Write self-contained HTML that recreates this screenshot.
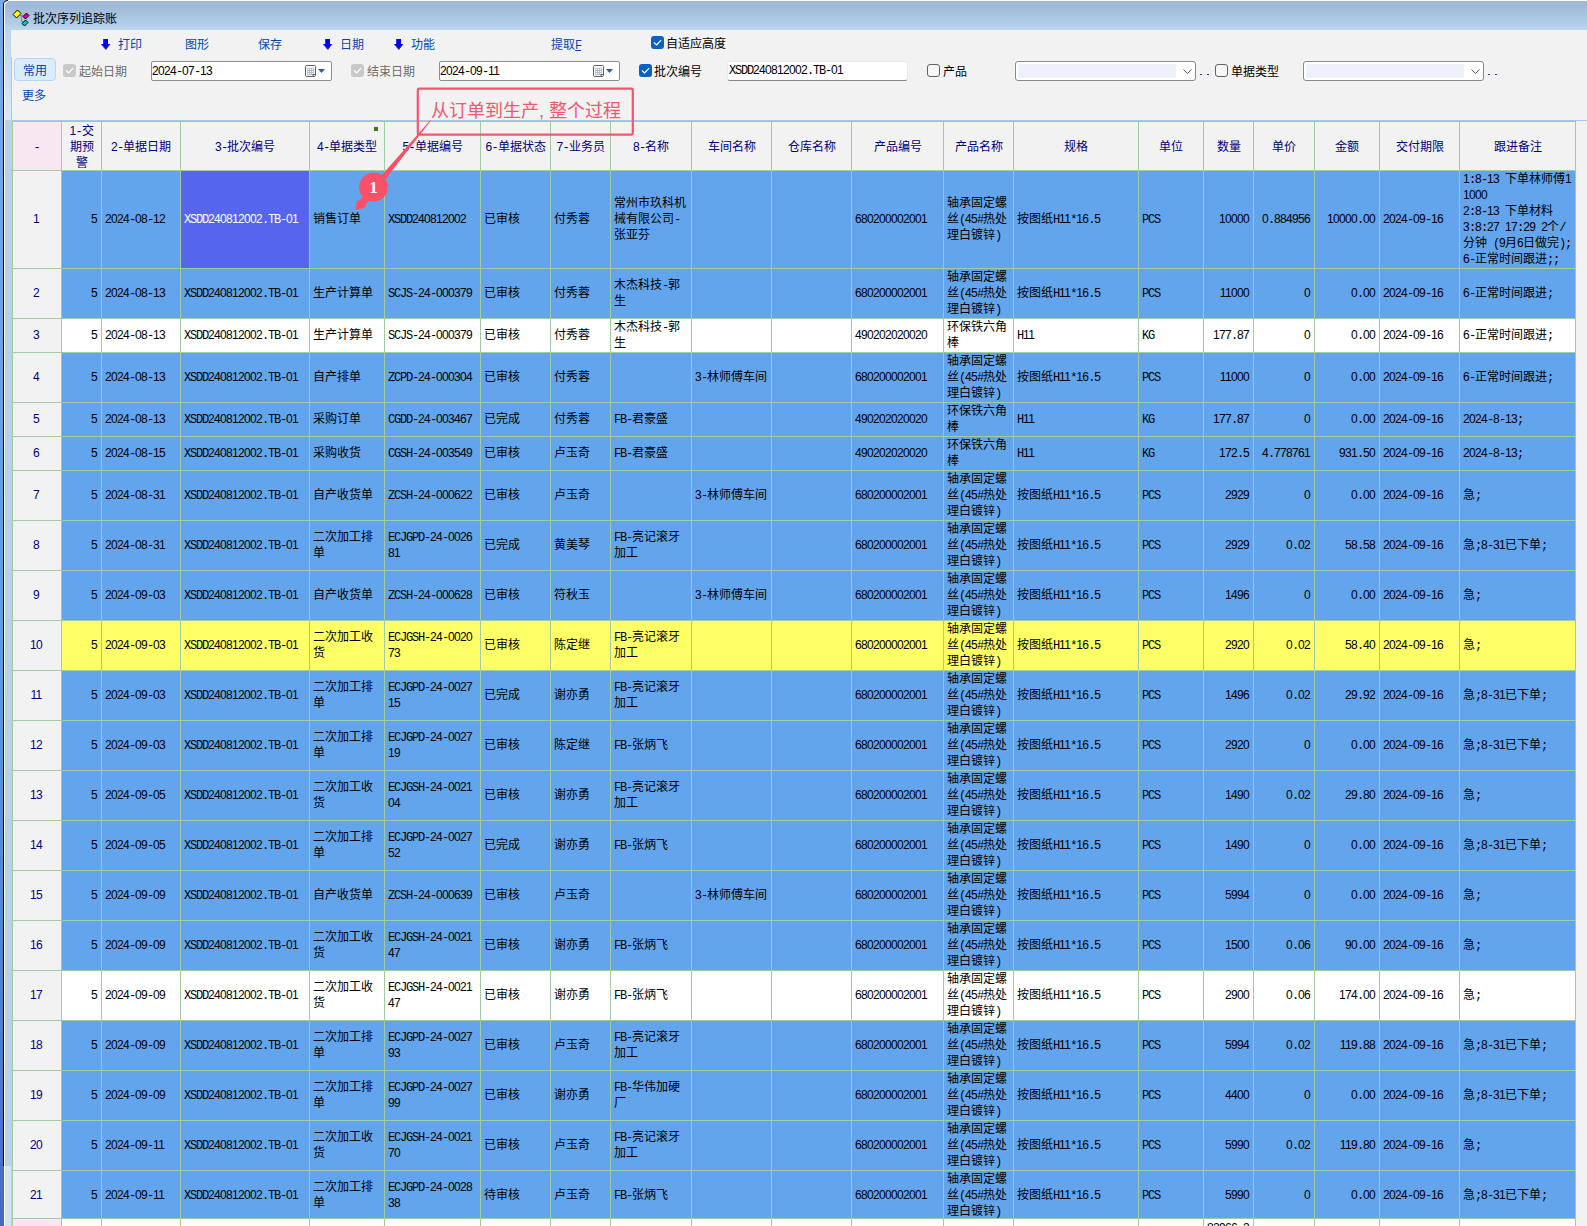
<!DOCTYPE html>
<html lang="zh-CN">
<head>
<meta charset="utf-8">
<title>批次序列追踪账</title>
<style>
html,body{margin:0;padding:0}
body{width:1587px;height:1226px;overflow:hidden;position:relative;background:#f2f2f2;font:12px/16px "Liberation Sans",sans-serif;color:#000}
div,span,b,i{box-sizing:border-box}
i{font-style:normal;font-family:"Liberation Mono",monospace;font-size:12px;letter-spacing:-1.2px;line-height:0}
u{text-decoration:none;font-family:"Liberation Sans",sans-serif;font-size:12px;letter-spacing:-0.67px;line-height:0}
.abs{position:absolute}
/* window chrome */
#lb{position:absolute;left:0;top:0;width:3px;height:1226px;background:linear-gradient(#76a8ea 0,#6ea3e9 20%,#5f9be8 50%,#4a7ad2 88%,#4468c8 100%)}
#lk{position:absolute;left:3px;top:0;width:1px;height:1226px;background:linear-gradient(#000 0,#000 1166px,#6a6a6a 1166px)}
#lw{position:absolute;left:4px;top:0;width:1px;height:1226px;background:#fff}
#ls{position:absolute;left:5px;top:0;width:7px;height:1226px;background:#bad0ea}
#ls2{position:absolute;left:5px;top:30px;width:6px;height:90px;background:linear-gradient(#bcd5ee,#dbe8f6)}
#ls4{position:absolute;left:11px;top:57px;width:1px;height:63px;background:#a9c9ef}
#ls5{position:absolute;left:11px;top:30px;width:1px;height:27px;background:#f2f2f2}
#ls3{position:absolute;left:5px;top:1166px;width:6px;height:60px;background:#d4e4f3}
#tb{position:absolute;left:5px;top:0;width:1582px;height:30px;background:linear-gradient(#fff 0,#fff 1px,#9cb6d6 1px,#a3bddb 10px,#b0cbe6 22px,#bbd5ee 30px)}
#corner{position:absolute;left:0;top:0;width:8px;height:8px}
#ttl{position:absolute;left:33px;top:11px;height:16px;line-height:16px;white-space:nowrap}
/* toolbar */
.t{position:absolute;white-space:nowrap;height:16px;line-height:16px}
.bl{color:#0645ad}
.gy{color:#6d6d6d}
.arr{position:absolute;width:10px;height:11px}
.inp{position:absolute;height:20px;background:#fff;border:1px solid #8e8e8e;border-radius:2px}
.inp .t{left:0px;top:1px}
.dot{width:2px;height:1px;background:#0645ad}
.inp2{position:absolute;height:20px;background:#fff;border:1px solid #e9e9e9;border-bottom:1px solid #868686;border-radius:3px}
.cmb{position:absolute;height:20px;background:#fff;border:1px solid #8a8a8a;border-radius:3px}
.cmb b{position:absolute;left:2px;top:2px;right:19px;bottom:2px;background:#eef0fc}
.cb{position:absolute;width:13px;height:13px;border-radius:3px}
.cb.d{background:#c9c9c9}
.cb.on{background:#0a60c4}
.cb.off{background:#f6f6f6;border:1px solid #626262}
.cb svg{position:absolute;left:0;top:0}
/* grid */
#gtop{position:absolute;left:12px;top:120px;width:1575px;height:1px;background:#a4c6ea}
#g{position:absolute;left:12px;top:121px;width:1564px;height:1105px;background:#a3cba3;overflow:hidden}
.r{position:absolute;left:0;width:1564px}
.c{position:absolute;top:0;height:100%;display:flex;align-items:center;padding:0 4px 1px 3px;white-space:nowrap;overflow:hidden}
.c span{display:block}
.h .c{background:#f2f2f2;color:#000080;justify-content:center;text-align:center;padding:2px 4px 0 4px}
.h .k0{background:#f8e6f0}
.s .c{background:#62a5ed}
.w .c{background:#fff}
.y .c{background:#ffff66}
.r .k0{background:#f2f2f2;color:#000080;justify-content:center;padding-right:5px}
.l .c{padding-top:1px;padding-bottom:0}
.h .k0{background:#f8e6f0}
.ft .k0{background:#f8e6f0}
.ft .c{align-items:flex-start;padding-top:1px}
.k1,.k15,.k16,.k17{justify-content:flex-end;text-align:right;padding-right:4px}
.s .c.f{background:#5565ee;color:#fff}
.gs{position:absolute;left:362px;top:5px;width:4px;height:4px;background:#3b7d23}
.k0{left:1px;width:48px}.k1{left:50px;width:39px}.k2{left:90px;width:78px}.k3{left:169px;width:128px}.k4{left:298px;width:74px}.k5{left:373px;width:95px}.k6{left:469px;width:69px}.k7{left:539px;width:59px}.k8{left:599px;width:80px}.k9{left:680px;width:79px}.k10{left:760px;width:79px}.k11{left:840px;width:91px}.k12{left:932px;width:69px}.k13{left:1002px;width:124px}.k14{left:1127px;width:64px}.k15{left:1192px;width:49px}.k16{left:1242px;width:60px}.k17{left:1303px;width:64px}.k18{left:1368px;width:79px}.k19{left:1448px;width:115px}
</style>
</head>
<body>
<div id="ls"></div><div id="ls2"></div><div id="ls3"></div><div id="ls4"></div><div id="ls5"></div>
<div id="tb"></div>
<div id="lb"></div><div id="lk"></div><div id="lw"></div>
<svg id="corner" viewBox="0 0 8 8"><path d="M0 0H8V0.5Q3.5 0.5 3.5 5V8H0Z" fill="#76a8ea"/><path d="M3.5 8V5Q3.5 0.5 8 0.5" fill="none" stroke="#111" stroke-width="1"/><path d="M4.5 8V5.5Q4.6 1.6 8 1.5" fill="none" stroke="#fff" stroke-width="1"/></svg>
<svg class="abs" style="left:12px;top:9px" width="20" height="20" viewBox="0 0 20 20">
<path d="M8 6.5H11.5M9.5 6.5V12.5H11.5" fill="none" stroke="#8a8a8a" stroke-width="1"/>
<path d="M5.5 1L9 4.5L4.5 9L1 5.5Z" fill="#ffff00" stroke="#000" stroke-width="1"/>
<path d="M14.5 4L17 6.5L13.5 10L11 7.5Z" fill="#e000a0" stroke="#000" stroke-width="1"/>
<path d="M13.5 11L16 13.5L12.5 17L10 14.5Z" fill="#00d0d0" stroke="#000" stroke-width="1"/>
</svg>
<div id="ttl">批次序列追踪账</div>

<svg width="0" height="0" style="position:absolute"><defs>
<g id="da"><path d="M2.2 0H7V5.1H9.3L5 10.8L0 5.1H2.2Z" fill="#0000ff"/><path d="M0 5.1L5 10.8" stroke="#5a5a20" stroke-width="0.8" fill="none"/></g>
<g id="cal"><rect x="0.5" y="0.5" width="10" height="11" rx="1.2" fill="#f1f5fc" stroke="#6e6060"/><rect x="2.2" y="3.1" width="6.6" height="6.9" fill="#b4bccb"/><g fill="#fff"><rect x="3" y="4" width="1" height="1"/><rect x="5" y="4" width="1" height="1"/><rect x="7" y="4" width="1" height="1"/><rect x="3" y="6" width="1" height="1"/><rect x="5" y="6" width="1" height="1"/><rect x="7" y="6" width="1" height="1"/><rect x="3" y="8" width="1" height="1"/><rect x="5" y="8" width="1" height="1"/><rect x="7" y="8" width="1" height="1"/></g><path d="M8 11V9.5H10.5" fill="none" stroke="#6e6060"/><path d="M13 4H20L16.5 8Z" fill="#3b5a8c"/></g>
<g id="chk"><path d="M3.2 6.7L5.5 9L9.9 4.3" fill="none" stroke="#fff" stroke-width="1.1" stroke-linecap="round" stroke-linejoin="round"/></g>
<g id="chv"><path d="M0.5 0.5L4.5 4.5L8.5 0.5" fill="none" stroke="#555" stroke-width="1"/></g>
</defs></svg>
<svg class="arr" style="left:101px;top:39px" viewBox="0 0 10 11"><use href="#da"/></svg>
<div class="t bl" style="left:118px;top:37px">打印</div>
<div class="t bl" style="left:185px;top:37px">图形</div>
<div class="t bl" style="left:258px;top:37px">保存</div>
<svg class="arr" style="left:323px;top:39px" viewBox="0 0 10 11"><use href="#da"/></svg>
<div class="t bl" style="left:340px;top:37px">日期</div>
<svg class="arr" style="left:394px;top:39px" viewBox="0 0 10 11"><use href="#da"/></svg>
<div class="t bl" style="left:411px;top:37px">功能</div>
<div class="t bl" style="left:551px;top:37px">提取<i style="text-decoration:underline">F</i></div>
<div class="cb on" style="left:651px;top:36px"><svg width="13" height="13"><use href="#chk"/></svg></div>
<div class="t" style="left:666px;top:36px">自适应高度</div>

<div class="abs" style="left:14px;top:58px;width:42px;height:23px;background:#d9ecfc;border:1px solid #b4d7f7;border-radius:4px"></div>
<div class="t bl" style="left:23px;top:63px">常用</div>
<div class="cb d" style="left:63px;top:64px"><svg width="13" height="13"><use href="#chk"/></svg></div>
<div class="t gy" style="left:79px;top:64px">起始日期</div>
<div class="inp" style="left:151px;top:61px;width:181px"><div class="t"><u>2024</u><i>-</i><u>07</u><i>-</i><u>13</u></div><svg class="abs" style="left:153px;top:3px" width="22" height="13"><use href="#cal"/></svg></div>
<div class="cb d" style="left:351px;top:64px"><svg width="13" height="13"><use href="#chk"/></svg></div>
<div class="t gy" style="left:367px;top:64px">结束日期</div>
<div class="inp" style="left:439px;top:61px;width:181px"><div class="t"><u>2024</u><i>-</i><u>09</u><i>-</i><u>11</u></div><svg class="abs" style="left:153px;top:3px" width="22" height="13"><use href="#cal"/></svg></div>
<div class="cb on" style="left:639px;top:64px"><svg width="13" height="13"><use href="#chk"/></svg></div>
<div class="t" style="left:654px;top:64px">批次编号</div>
<div class="inp2" style="left:727px;top:61px;width:181px"><div class="t" style="left:1px;top:0px"><i>XSDD</i><u>240812002</u><i>.TB-</i><u>01</u></div></div>
<div class="cb off" style="left:927px;top:64px"></div>
<div class="t" style="left:943px;top:64px">产品</div>
<div class="cmb" style="left:1015px;top:61px;width:181px"><b></b><svg class="abs" style="left:167px;top:7px" width="9" height="6"><use href="#chv"/></svg></div>
<div class="abs dot" style="left:1200px;top:74px"></div><div class="abs dot" style="left:1207px;top:74px"></div>
<div class="cb off" style="left:1215px;top:64px"></div>
<div class="t" style="left:1231px;top:64px">单据类型</div>
<div class="cmb" style="left:1303px;top:61px;width:181px"><b></b><svg class="abs" style="left:167px;top:7px" width="9" height="6"><use href="#chv"/></svg></div>
<div class="abs dot" style="left:1488px;top:74px"></div><div class="abs dot" style="left:1495px;top:74px"></div>
<div class="t bl" style="left:22px;top:88px">更多</div>


<div id="gtop"></div>
<div id="g">
<div class="r h" style="top:1px;height:48px">
<div class="c k0"><span><i>-</i></span></div>
<div class="c k1"><span><u>1</u><i>-</i>交<br>期预<br>警</span></div>
<div class="c k2"><span><u>2</u><i>-</i>单据日期</span></div>
<div class="c k3"><span><u>3</u><i>-</i>批次编号</span></div>
<div class="c k4"><span><u>4</u><i>-</i>单据类型</span></div>
<div class="c k5"><span><u>5</u><i>-</i>单据编号</span></div>
<div class="c k6"><span><u>6</u><i>-</i>单据状态</span></div>
<div class="c k7"><span><u>7</u><i>-</i>业务员</span></div>
<div class="c k8"><span><u>8</u><i>-</i>名称</span></div>
<div class="c k9"><span>车间名称</span></div>
<div class="c k10"><span>仓库名称</span></div>
<div class="c k11"><span>产品编号</span></div>
<div class="c k12"><span>产品名称</span></div>
<div class="c k13"><span>规格</span></div>
<div class="c k14"><span>单位</span></div>
<div class="c k15"><span>数量</span></div>
<div class="c k16"><span>单价</span></div>
<div class="c k17"><span>金额</span></div>
<div class="c k18"><span>交付期限</span></div>
<div class="c k19"><span>跟进备注</span></div>
<b class="gs"></b>
</div>
<div class="r s" style="top:50px;height:97px">
<div class="c k0"><span><u>1</u></span></div>
<div class="c k1"><span><u>5</u></span></div>
<div class="c k2"><span><u>2024</u><i>-</i><u>08</u><i>-</i><u>12</u></span></div>
<div class="c k3 f"><span><i>XSDD</i><u>240812002</u><i>.TB-</i><u>01</u></span></div>
<div class="c k4"><span>销售订单</span></div>
<div class="c k5"><span><i>XSDD</i><u>240812002</u></span></div>
<div class="c k6"><span>已审核</span></div>
<div class="c k7"><span>付秀蓉</span></div>
<div class="c k8"><span>常州市玖科机<br>械有限公司<i>-</i><br>张亚芬</span></div>
<div class="c k9"></div>
<div class="c k10"></div>
<div class="c k11"><span><u>680200002001</u></span></div>
<div class="c k12"><span>轴承固定螺<br>丝<i>(</i><u>45</u><i>#</i>热处<br>理白镀锌<i>)</i></span></div>
<div class="c k13"><span>按图纸<i>H</i><u>11</u><i>*</i><u>16</u><i>.</i><u>5</u></span></div>
<div class="c k14"><span><i>PCS</i></span></div>
<div class="c k15"><span><u>10000</u></span></div>
<div class="c k16"><span><u>0</u><i>.</i><u>884956</u></span></div>
<div class="c k17"><span><u>10000</u><i>.</i><u>00</u></span></div>
<div class="c k18"><span><u>2024</u><i>-</i><u>09</u><i>-</i><u>16</u></span></div>
<div class="c k19"><span><u>1</u><i>:</i><u>8</u><i>-</i><u>13</u><i> </i>下单林师傅<u>1</u><br><u>1000</u><br><u>2</u><i>:</i><u>8</u><i>-</i><u>13</u><i> </i>下单材料<br><u>3</u><i>:</i><u>8</u><i>:</i><u>27</u><i> </i><u>17</u><i>:</i><u>29</u><i> </i><u>2</u>个<i>/</i><br>分钟<i> (</i><u>9</u>月<u>6</u>日做完<i>);</i><br><u>6</u><i>-</i>正常时间跟进<i>;;</i></span></div>
</div>
<div class="r s" style="top:148px;height:49px">
<div class="c k0"><span><u>2</u></span></div>
<div class="c k1"><span><u>5</u></span></div>
<div class="c k2"><span><u>2024</u><i>-</i><u>08</u><i>-</i><u>13</u></span></div>
<div class="c k3"><span><i>XSDD</i><u>240812002</u><i>.TB-</i><u>01</u></span></div>
<div class="c k4"><span>生产计算单</span></div>
<div class="c k5"><span><i>SCJS-</i><u>24</u><i>-</i><u>000379</u></span></div>
<div class="c k6"><span>已审核</span></div>
<div class="c k7"><span>付秀蓉</span></div>
<div class="c k8"><span>木杰科技<i>-</i>郭<br>生</span></div>
<div class="c k9"></div>
<div class="c k10"></div>
<div class="c k11"><span><u>680200002001</u></span></div>
<div class="c k12"><span>轴承固定螺<br>丝<i>(</i><u>45</u><i>#</i>热处<br>理白镀锌<i>)</i></span></div>
<div class="c k13"><span>按图纸<i>H</i><u>11</u><i>*</i><u>16</u><i>.</i><u>5</u></span></div>
<div class="c k14"><span><i>PCS</i></span></div>
<div class="c k15"><span><u>11000</u></span></div>
<div class="c k16"><span><u>0</u></span></div>
<div class="c k17"><span><u>0</u><i>.</i><u>00</u></span></div>
<div class="c k18"><span><u>2024</u><i>-</i><u>09</u><i>-</i><u>16</u></span></div>
<div class="c k19"><span><u>6</u><i>-</i>正常时间跟进<i>;</i></span></div>
</div>
<div class="r w" style="top:198px;height:33px">
<div class="c k0"><span><u>3</u></span></div>
<div class="c k1"><span><u>5</u></span></div>
<div class="c k2"><span><u>2024</u><i>-</i><u>08</u><i>-</i><u>13</u></span></div>
<div class="c k3"><span><i>XSDD</i><u>240812002</u><i>.TB-</i><u>01</u></span></div>
<div class="c k4"><span>生产计算单</span></div>
<div class="c k5"><span><i>SCJS-</i><u>24</u><i>-</i><u>000379</u></span></div>
<div class="c k6"><span>已审核</span></div>
<div class="c k7"><span>付秀蓉</span></div>
<div class="c k8"><span>木杰科技<i>-</i>郭<br>生</span></div>
<div class="c k9"></div>
<div class="c k10"></div>
<div class="c k11"><span><u>490202020020</u></span></div>
<div class="c k12"><span>环保铁六角<br>棒</span></div>
<div class="c k13"><span><i>H</i><u>11</u></span></div>
<div class="c k14"><span><i>KG</i></span></div>
<div class="c k15"><span><u>177</u><i>.</i><u>87</u></span></div>
<div class="c k16"><span><u>0</u></span></div>
<div class="c k17"><span><u>0</u><i>.</i><u>00</u></span></div>
<div class="c k18"><span><u>2024</u><i>-</i><u>09</u><i>-</i><u>16</u></span></div>
<div class="c k19"><span><u>6</u><i>-</i>正常时间跟进<i>;</i></span></div>
</div>
<div class="r s" style="top:232px;height:49px">
<div class="c k0"><span><u>4</u></span></div>
<div class="c k1"><span><u>5</u></span></div>
<div class="c k2"><span><u>2024</u><i>-</i><u>08</u><i>-</i><u>13</u></span></div>
<div class="c k3"><span><i>XSDD</i><u>240812002</u><i>.TB-</i><u>01</u></span></div>
<div class="c k4"><span>自产排单</span></div>
<div class="c k5"><span><i>ZCPD-</i><u>24</u><i>-</i><u>000304</u></span></div>
<div class="c k6"><span>已审核</span></div>
<div class="c k7"><span>付秀蓉</span></div>
<div class="c k8"></div>
<div class="c k9"><span><u>3</u><i>-</i>林师傅车间</span></div>
<div class="c k10"></div>
<div class="c k11"><span><u>680200002001</u></span></div>
<div class="c k12"><span>轴承固定螺<br>丝<i>(</i><u>45</u><i>#</i>热处<br>理白镀锌<i>)</i></span></div>
<div class="c k13"><span>按图纸<i>H</i><u>11</u><i>*</i><u>16</u><i>.</i><u>5</u></span></div>
<div class="c k14"><span><i>PCS</i></span></div>
<div class="c k15"><span><u>11000</u></span></div>
<div class="c k16"><span><u>0</u></span></div>
<div class="c k17"><span><u>0</u><i>.</i><u>00</u></span></div>
<div class="c k18"><span><u>2024</u><i>-</i><u>09</u><i>-</i><u>16</u></span></div>
<div class="c k19"><span><u>6</u><i>-</i>正常时间跟进<i>;</i></span></div>
</div>
<div class="r s" style="top:282px;height:33px">
<div class="c k0"><span><u>5</u></span></div>
<div class="c k1"><span><u>5</u></span></div>
<div class="c k2"><span><u>2024</u><i>-</i><u>08</u><i>-</i><u>13</u></span></div>
<div class="c k3"><span><i>XSDD</i><u>240812002</u><i>.TB-</i><u>01</u></span></div>
<div class="c k4"><span>采购订单</span></div>
<div class="c k5"><span><i>CGDD-</i><u>24</u><i>-</i><u>003467</u></span></div>
<div class="c k6"><span>已完成</span></div>
<div class="c k7"><span>付秀蓉</span></div>
<div class="c k8"><span><i>FB-</i>君豪盛</span></div>
<div class="c k9"></div>
<div class="c k10"></div>
<div class="c k11"><span><u>490202020020</u></span></div>
<div class="c k12"><span>环保铁六角<br>棒</span></div>
<div class="c k13"><span><i>H</i><u>11</u></span></div>
<div class="c k14"><span><i>KG</i></span></div>
<div class="c k15"><span><u>177</u><i>.</i><u>87</u></span></div>
<div class="c k16"><span><u>0</u></span></div>
<div class="c k17"><span><u>0</u><i>.</i><u>00</u></span></div>
<div class="c k18"><span><u>2024</u><i>-</i><u>09</u><i>-</i><u>16</u></span></div>
<div class="c k19"><span><u>2024</u><i>-</i><u>8</u><i>-</i><u>13</u><i>;</i></span></div>
</div>
<div class="r s" style="top:316px;height:33px">
<div class="c k0"><span><u>6</u></span></div>
<div class="c k1"><span><u>5</u></span></div>
<div class="c k2"><span><u>2024</u><i>-</i><u>08</u><i>-</i><u>15</u></span></div>
<div class="c k3"><span><i>XSDD</i><u>240812002</u><i>.TB-</i><u>01</u></span></div>
<div class="c k4"><span>采购收货</span></div>
<div class="c k5"><span><i>CGSH-</i><u>24</u><i>-</i><u>003549</u></span></div>
<div class="c k6"><span>已审核</span></div>
<div class="c k7"><span>卢玉奇</span></div>
<div class="c k8"><span><i>FB-</i>君豪盛</span></div>
<div class="c k9"></div>
<div class="c k10"></div>
<div class="c k11"><span><u>490202020020</u></span></div>
<div class="c k12"><span>环保铁六角<br>棒</span></div>
<div class="c k13"><span><i>H</i><u>11</u></span></div>
<div class="c k14"><span><i>KG</i></span></div>
<div class="c k15"><span><u>172</u><i>.</i><u>5</u></span></div>
<div class="c k16"><span><u>4</u><i>.</i><u>778761</u></span></div>
<div class="c k17"><span><u>931</u><i>.</i><u>50</u></span></div>
<div class="c k18"><span><u>2024</u><i>-</i><u>09</u><i>-</i><u>16</u></span></div>
<div class="c k19"><span><u>2024</u><i>-</i><u>8</u><i>-</i><u>13</u><i>;</i></span></div>
</div>
<div class="r s" style="top:350px;height:49px">
<div class="c k0"><span><u>7</u></span></div>
<div class="c k1"><span><u>5</u></span></div>
<div class="c k2"><span><u>2024</u><i>-</i><u>08</u><i>-</i><u>31</u></span></div>
<div class="c k3"><span><i>XSDD</i><u>240812002</u><i>.TB-</i><u>01</u></span></div>
<div class="c k4"><span>自产收货单</span></div>
<div class="c k5"><span><i>ZCSH-</i><u>24</u><i>-</i><u>000622</u></span></div>
<div class="c k6"><span>已审核</span></div>
<div class="c k7"><span>卢玉奇</span></div>
<div class="c k8"></div>
<div class="c k9"><span><u>3</u><i>-</i>林师傅车间</span></div>
<div class="c k10"></div>
<div class="c k11"><span><u>680200002001</u></span></div>
<div class="c k12"><span>轴承固定螺<br>丝<i>(</i><u>45</u><i>#</i>热处<br>理白镀锌<i>)</i></span></div>
<div class="c k13"><span>按图纸<i>H</i><u>11</u><i>*</i><u>16</u><i>.</i><u>5</u></span></div>
<div class="c k14"><span><i>PCS</i></span></div>
<div class="c k15"><span><u>2929</u></span></div>
<div class="c k16"><span><u>0</u></span></div>
<div class="c k17"><span><u>0</u><i>.</i><u>00</u></span></div>
<div class="c k18"><span><u>2024</u><i>-</i><u>09</u><i>-</i><u>16</u></span></div>
<div class="c k19"><span>急<i>;</i></span></div>
</div>
<div class="r s" style="top:400px;height:49px">
<div class="c k0"><span><u>8</u></span></div>
<div class="c k1"><span><u>5</u></span></div>
<div class="c k2"><span><u>2024</u><i>-</i><u>08</u><i>-</i><u>31</u></span></div>
<div class="c k3"><span><i>XSDD</i><u>240812002</u><i>.TB-</i><u>01</u></span></div>
<div class="c k4"><span>二次加工排<br>单</span></div>
<div class="c k5"><span><i>ECJGPD-</i><u>24</u><i>-</i><u>0026</u><br><u>81</u></span></div>
<div class="c k6"><span>已完成</span></div>
<div class="c k7"><span>黄美琴</span></div>
<div class="c k8"><span><i>FB-</i>亮记滚牙<br>加工</span></div>
<div class="c k9"></div>
<div class="c k10"></div>
<div class="c k11"><span><u>680200002001</u></span></div>
<div class="c k12"><span>轴承固定螺<br>丝<i>(</i><u>45</u><i>#</i>热处<br>理白镀锌<i>)</i></span></div>
<div class="c k13"><span>按图纸<i>H</i><u>11</u><i>*</i><u>16</u><i>.</i><u>5</u></span></div>
<div class="c k14"><span><i>PCS</i></span></div>
<div class="c k15"><span><u>2929</u></span></div>
<div class="c k16"><span><u>0</u><i>.</i><u>02</u></span></div>
<div class="c k17"><span><u>58</u><i>.</i><u>58</u></span></div>
<div class="c k18"><span><u>2024</u><i>-</i><u>09</u><i>-</i><u>16</u></span></div>
<div class="c k19"><span>急<i>;</i><u>8</u><i>-</i><u>31</u>已下单<i>;</i></span></div>
</div>
<div class="r s" style="top:450px;height:49px">
<div class="c k0"><span><u>9</u></span></div>
<div class="c k1"><span><u>5</u></span></div>
<div class="c k2"><span><u>2024</u><i>-</i><u>09</u><i>-</i><u>03</u></span></div>
<div class="c k3"><span><i>XSDD</i><u>240812002</u><i>.TB-</i><u>01</u></span></div>
<div class="c k4"><span>自产收货单</span></div>
<div class="c k5"><span><i>ZCSH-</i><u>24</u><i>-</i><u>000628</u></span></div>
<div class="c k6"><span>已审核</span></div>
<div class="c k7"><span>符秋玉</span></div>
<div class="c k8"></div>
<div class="c k9"><span><u>3</u><i>-</i>林师傅车间</span></div>
<div class="c k10"></div>
<div class="c k11"><span><u>680200002001</u></span></div>
<div class="c k12"><span>轴承固定螺<br>丝<i>(</i><u>45</u><i>#</i>热处<br>理白镀锌<i>)</i></span></div>
<div class="c k13"><span>按图纸<i>H</i><u>11</u><i>*</i><u>16</u><i>.</i><u>5</u></span></div>
<div class="c k14"><span><i>PCS</i></span></div>
<div class="c k15"><span><u>1496</u></span></div>
<div class="c k16"><span><u>0</u></span></div>
<div class="c k17"><span><u>0</u><i>.</i><u>00</u></span></div>
<div class="c k18"><span><u>2024</u><i>-</i><u>09</u><i>-</i><u>16</u></span></div>
<div class="c k19"><span>急<i>;</i></span></div>
</div>
<div class="r y" style="top:500px;height:49px">
<div class="c k0"><span><u>10</u></span></div>
<div class="c k1"><span><u>5</u></span></div>
<div class="c k2"><span><u>2024</u><i>-</i><u>09</u><i>-</i><u>03</u></span></div>
<div class="c k3"><span><i>XSDD</i><u>240812002</u><i>.TB-</i><u>01</u></span></div>
<div class="c k4"><span>二次加工收<br>货</span></div>
<div class="c k5"><span><i>ECJGSH-</i><u>24</u><i>-</i><u>0020</u><br><u>73</u></span></div>
<div class="c k6"><span>已审核</span></div>
<div class="c k7"><span>陈定继</span></div>
<div class="c k8"><span><i>FB-</i>亮记滚牙<br>加工</span></div>
<div class="c k9"></div>
<div class="c k10"></div>
<div class="c k11"><span><u>680200002001</u></span></div>
<div class="c k12"><span>轴承固定螺<br>丝<i>(</i><u>45</u><i>#</i>热处<br>理白镀锌<i>)</i></span></div>
<div class="c k13"><span>按图纸<i>H</i><u>11</u><i>*</i><u>16</u><i>.</i><u>5</u></span></div>
<div class="c k14"><span><i>PCS</i></span></div>
<div class="c k15"><span><u>2920</u></span></div>
<div class="c k16"><span><u>0</u><i>.</i><u>02</u></span></div>
<div class="c k17"><span><u>58</u><i>.</i><u>40</u></span></div>
<div class="c k18"><span><u>2024</u><i>-</i><u>09</u><i>-</i><u>16</u></span></div>
<div class="c k19"><span>急<i>;</i></span></div>
</div>
<div class="r s" style="top:550px;height:49px">
<div class="c k0"><span><u>11</u></span></div>
<div class="c k1"><span><u>5</u></span></div>
<div class="c k2"><span><u>2024</u><i>-</i><u>09</u><i>-</i><u>03</u></span></div>
<div class="c k3"><span><i>XSDD</i><u>240812002</u><i>.TB-</i><u>01</u></span></div>
<div class="c k4"><span>二次加工排<br>单</span></div>
<div class="c k5"><span><i>ECJGPD-</i><u>24</u><i>-</i><u>0027</u><br><u>15</u></span></div>
<div class="c k6"><span>已完成</span></div>
<div class="c k7"><span>谢亦勇</span></div>
<div class="c k8"><span><i>FB-</i>亮记滚牙<br>加工</span></div>
<div class="c k9"></div>
<div class="c k10"></div>
<div class="c k11"><span><u>680200002001</u></span></div>
<div class="c k12"><span>轴承固定螺<br>丝<i>(</i><u>45</u><i>#</i>热处<br>理白镀锌<i>)</i></span></div>
<div class="c k13"><span>按图纸<i>H</i><u>11</u><i>*</i><u>16</u><i>.</i><u>5</u></span></div>
<div class="c k14"><span><i>PCS</i></span></div>
<div class="c k15"><span><u>1496</u></span></div>
<div class="c k16"><span><u>0</u><i>.</i><u>02</u></span></div>
<div class="c k17"><span><u>29</u><i>.</i><u>92</u></span></div>
<div class="c k18"><span><u>2024</u><i>-</i><u>09</u><i>-</i><u>16</u></span></div>
<div class="c k19"><span>急<i>;</i><u>8</u><i>-</i><u>31</u>已下单<i>;</i></span></div>
</div>
<div class="r s" style="top:600px;height:49px">
<div class="c k0"><span><u>12</u></span></div>
<div class="c k1"><span><u>5</u></span></div>
<div class="c k2"><span><u>2024</u><i>-</i><u>09</u><i>-</i><u>03</u></span></div>
<div class="c k3"><span><i>XSDD</i><u>240812002</u><i>.TB-</i><u>01</u></span></div>
<div class="c k4"><span>二次加工排<br>单</span></div>
<div class="c k5"><span><i>ECJGPD-</i><u>24</u><i>-</i><u>0027</u><br><u>19</u></span></div>
<div class="c k6"><span>已审核</span></div>
<div class="c k7"><span>陈定继</span></div>
<div class="c k8"><span><i>FB-</i>张炳飞</span></div>
<div class="c k9"></div>
<div class="c k10"></div>
<div class="c k11"><span><u>680200002001</u></span></div>
<div class="c k12"><span>轴承固定螺<br>丝<i>(</i><u>45</u><i>#</i>热处<br>理白镀锌<i>)</i></span></div>
<div class="c k13"><span>按图纸<i>H</i><u>11</u><i>*</i><u>16</u><i>.</i><u>5</u></span></div>
<div class="c k14"><span><i>PCS</i></span></div>
<div class="c k15"><span><u>2920</u></span></div>
<div class="c k16"><span><u>0</u></span></div>
<div class="c k17"><span><u>0</u><i>.</i><u>00</u></span></div>
<div class="c k18"><span><u>2024</u><i>-</i><u>09</u><i>-</i><u>16</u></span></div>
<div class="c k19"><span>急<i>;</i><u>8</u><i>-</i><u>31</u>已下单<i>;</i></span></div>
</div>
<div class="r s" style="top:650px;height:49px">
<div class="c k0"><span><u>13</u></span></div>
<div class="c k1"><span><u>5</u></span></div>
<div class="c k2"><span><u>2024</u><i>-</i><u>09</u><i>-</i><u>05</u></span></div>
<div class="c k3"><span><i>XSDD</i><u>240812002</u><i>.TB-</i><u>01</u></span></div>
<div class="c k4"><span>二次加工收<br>货</span></div>
<div class="c k5"><span><i>ECJGSH-</i><u>24</u><i>-</i><u>0021</u><br><u>04</u></span></div>
<div class="c k6"><span>已审核</span></div>
<div class="c k7"><span>谢亦勇</span></div>
<div class="c k8"><span><i>FB-</i>亮记滚牙<br>加工</span></div>
<div class="c k9"></div>
<div class="c k10"></div>
<div class="c k11"><span><u>680200002001</u></span></div>
<div class="c k12"><span>轴承固定螺<br>丝<i>(</i><u>45</u><i>#</i>热处<br>理白镀锌<i>)</i></span></div>
<div class="c k13"><span>按图纸<i>H</i><u>11</u><i>*</i><u>16</u><i>.</i><u>5</u></span></div>
<div class="c k14"><span><i>PCS</i></span></div>
<div class="c k15"><span><u>1490</u></span></div>
<div class="c k16"><span><u>0</u><i>.</i><u>02</u></span></div>
<div class="c k17"><span><u>29</u><i>.</i><u>80</u></span></div>
<div class="c k18"><span><u>2024</u><i>-</i><u>09</u><i>-</i><u>16</u></span></div>
<div class="c k19"><span>急<i>;</i></span></div>
</div>
<div class="r s" style="top:700px;height:49px">
<div class="c k0"><span><u>14</u></span></div>
<div class="c k1"><span><u>5</u></span></div>
<div class="c k2"><span><u>2024</u><i>-</i><u>09</u><i>-</i><u>05</u></span></div>
<div class="c k3"><span><i>XSDD</i><u>240812002</u><i>.TB-</i><u>01</u></span></div>
<div class="c k4"><span>二次加工排<br>单</span></div>
<div class="c k5"><span><i>ECJGPD-</i><u>24</u><i>-</i><u>0027</u><br><u>52</u></span></div>
<div class="c k6"><span>已完成</span></div>
<div class="c k7"><span>谢亦勇</span></div>
<div class="c k8"><span><i>FB-</i>张炳飞</span></div>
<div class="c k9"></div>
<div class="c k10"></div>
<div class="c k11"><span><u>680200002001</u></span></div>
<div class="c k12"><span>轴承固定螺<br>丝<i>(</i><u>45</u><i>#</i>热处<br>理白镀锌<i>)</i></span></div>
<div class="c k13"><span>按图纸<i>H</i><u>11</u><i>*</i><u>16</u><i>.</i><u>5</u></span></div>
<div class="c k14"><span><i>PCS</i></span></div>
<div class="c k15"><span><u>1490</u></span></div>
<div class="c k16"><span><u>0</u></span></div>
<div class="c k17"><span><u>0</u><i>.</i><u>00</u></span></div>
<div class="c k18"><span><u>2024</u><i>-</i><u>09</u><i>-</i><u>16</u></span></div>
<div class="c k19"><span>急<i>;</i><u>8</u><i>-</i><u>31</u>已下单<i>;</i></span></div>
</div>
<div class="r s" style="top:750px;height:49px">
<div class="c k0"><span><u>15</u></span></div>
<div class="c k1"><span><u>5</u></span></div>
<div class="c k2"><span><u>2024</u><i>-</i><u>09</u><i>-</i><u>09</u></span></div>
<div class="c k3"><span><i>XSDD</i><u>240812002</u><i>.TB-</i><u>01</u></span></div>
<div class="c k4"><span>自产收货单</span></div>
<div class="c k5"><span><i>ZCSH-</i><u>24</u><i>-</i><u>000639</u></span></div>
<div class="c k6"><span>已审核</span></div>
<div class="c k7"><span>卢玉奇</span></div>
<div class="c k8"></div>
<div class="c k9"><span><u>3</u><i>-</i>林师傅车间</span></div>
<div class="c k10"></div>
<div class="c k11"><span><u>680200002001</u></span></div>
<div class="c k12"><span>轴承固定螺<br>丝<i>(</i><u>45</u><i>#</i>热处<br>理白镀锌<i>)</i></span></div>
<div class="c k13"><span>按图纸<i>H</i><u>11</u><i>*</i><u>16</u><i>.</i><u>5</u></span></div>
<div class="c k14"><span><i>PCS</i></span></div>
<div class="c k15"><span><u>5994</u></span></div>
<div class="c k16"><span><u>0</u></span></div>
<div class="c k17"><span><u>0</u><i>.</i><u>00</u></span></div>
<div class="c k18"><span><u>2024</u><i>-</i><u>09</u><i>-</i><u>16</u></span></div>
<div class="c k19"><span>急<i>;</i></span></div>
</div>
<div class="r s" style="top:800px;height:49px">
<div class="c k0"><span><u>16</u></span></div>
<div class="c k1"><span><u>5</u></span></div>
<div class="c k2"><span><u>2024</u><i>-</i><u>09</u><i>-</i><u>09</u></span></div>
<div class="c k3"><span><i>XSDD</i><u>240812002</u><i>.TB-</i><u>01</u></span></div>
<div class="c k4"><span>二次加工收<br>货</span></div>
<div class="c k5"><span><i>ECJGSH-</i><u>24</u><i>-</i><u>0021</u><br><u>47</u></span></div>
<div class="c k6"><span>已审核</span></div>
<div class="c k7"><span>谢亦勇</span></div>
<div class="c k8"><span><i>FB-</i>张炳飞</span></div>
<div class="c k9"></div>
<div class="c k10"></div>
<div class="c k11"><span><u>680200002001</u></span></div>
<div class="c k12"><span>轴承固定螺<br>丝<i>(</i><u>45</u><i>#</i>热处<br>理白镀锌<i>)</i></span></div>
<div class="c k13"><span>按图纸<i>H</i><u>11</u><i>*</i><u>16</u><i>.</i><u>5</u></span></div>
<div class="c k14"><span><i>PCS</i></span></div>
<div class="c k15"><span><u>1500</u></span></div>
<div class="c k16"><span><u>0</u><i>.</i><u>06</u></span></div>
<div class="c k17"><span><u>90</u><i>.</i><u>00</u></span></div>
<div class="c k18"><span><u>2024</u><i>-</i><u>09</u><i>-</i><u>16</u></span></div>
<div class="c k19"><span>急<i>;</i></span></div>
</div>
<div class="r w" style="top:850px;height:49px">
<div class="c k0"><span><u>17</u></span></div>
<div class="c k1"><span><u>5</u></span></div>
<div class="c k2"><span><u>2024</u><i>-</i><u>09</u><i>-</i><u>09</u></span></div>
<div class="c k3"><span><i>XSDD</i><u>240812002</u><i>.TB-</i><u>01</u></span></div>
<div class="c k4"><span>二次加工收<br>货</span></div>
<div class="c k5"><span><i>ECJGSH-</i><u>24</u><i>-</i><u>0021</u><br><u>47</u></span></div>
<div class="c k6"><span>已审核</span></div>
<div class="c k7"><span>谢亦勇</span></div>
<div class="c k8"><span><i>FB-</i>张炳飞</span></div>
<div class="c k9"></div>
<div class="c k10"></div>
<div class="c k11"><span><u>680200002001</u></span></div>
<div class="c k12"><span>轴承固定螺<br>丝<i>(</i><u>45</u><i>#</i>热处<br>理白镀锌<i>)</i></span></div>
<div class="c k13"><span>按图纸<i>H</i><u>11</u><i>*</i><u>16</u><i>.</i><u>5</u></span></div>
<div class="c k14"><span><i>PCS</i></span></div>
<div class="c k15"><span><u>2900</u></span></div>
<div class="c k16"><span><u>0</u><i>.</i><u>06</u></span></div>
<div class="c k17"><span><u>174</u><i>.</i><u>00</u></span></div>
<div class="c k18"><span><u>2024</u><i>-</i><u>09</u><i>-</i><u>16</u></span></div>
<div class="c k19"><span>急<i>;</i></span></div>
</div>
<div class="r s" style="top:900px;height:49px">
<div class="c k0"><span><u>18</u></span></div>
<div class="c k1"><span><u>5</u></span></div>
<div class="c k2"><span><u>2024</u><i>-</i><u>09</u><i>-</i><u>09</u></span></div>
<div class="c k3"><span><i>XSDD</i><u>240812002</u><i>.TB-</i><u>01</u></span></div>
<div class="c k4"><span>二次加工排<br>单</span></div>
<div class="c k5"><span><i>ECJGPD-</i><u>24</u><i>-</i><u>0027</u><br><u>93</u></span></div>
<div class="c k6"><span>已审核</span></div>
<div class="c k7"><span>卢玉奇</span></div>
<div class="c k8"><span><i>FB-</i>亮记滚牙<br>加工</span></div>
<div class="c k9"></div>
<div class="c k10"></div>
<div class="c k11"><span><u>680200002001</u></span></div>
<div class="c k12"><span>轴承固定螺<br>丝<i>(</i><u>45</u><i>#</i>热处<br>理白镀锌<i>)</i></span></div>
<div class="c k13"><span>按图纸<i>H</i><u>11</u><i>*</i><u>16</u><i>.</i><u>5</u></span></div>
<div class="c k14"><span><i>PCS</i></span></div>
<div class="c k15"><span><u>5994</u></span></div>
<div class="c k16"><span><u>0</u><i>.</i><u>02</u></span></div>
<div class="c k17"><span><u>119</u><i>.</i><u>88</u></span></div>
<div class="c k18"><span><u>2024</u><i>-</i><u>09</u><i>-</i><u>16</u></span></div>
<div class="c k19"><span>急<i>;</i><u>8</u><i>-</i><u>31</u>已下单<i>;</i></span></div>
</div>
<div class="r s" style="top:950px;height:49px">
<div class="c k0"><span><u>19</u></span></div>
<div class="c k1"><span><u>5</u></span></div>
<div class="c k2"><span><u>2024</u><i>-</i><u>09</u><i>-</i><u>09</u></span></div>
<div class="c k3"><span><i>XSDD</i><u>240812002</u><i>.TB-</i><u>01</u></span></div>
<div class="c k4"><span>二次加工排<br>单</span></div>
<div class="c k5"><span><i>ECJGPD-</i><u>24</u><i>-</i><u>0027</u><br><u>99</u></span></div>
<div class="c k6"><span>已审核</span></div>
<div class="c k7"><span>谢亦勇</span></div>
<div class="c k8"><span><i>FB-</i>华伟加硬<br>厂</span></div>
<div class="c k9"></div>
<div class="c k10"></div>
<div class="c k11"><span><u>680200002001</u></span></div>
<div class="c k12"><span>轴承固定螺<br>丝<i>(</i><u>45</u><i>#</i>热处<br>理白镀锌<i>)</i></span></div>
<div class="c k13"><span>按图纸<i>H</i><u>11</u><i>*</i><u>16</u><i>.</i><u>5</u></span></div>
<div class="c k14"><span><i>PCS</i></span></div>
<div class="c k15"><span><u>4400</u></span></div>
<div class="c k16"><span><u>0</u></span></div>
<div class="c k17"><span><u>0</u><i>.</i><u>00</u></span></div>
<div class="c k18"><span><u>2024</u><i>-</i><u>09</u><i>-</i><u>16</u></span></div>
<div class="c k19"><span>急<i>;</i><u>8</u><i>-</i><u>31</u>已下单<i>;</i></span></div>
</div>
<div class="r s" style="top:1000px;height:49px">
<div class="c k0"><span><u>20</u></span></div>
<div class="c k1"><span><u>5</u></span></div>
<div class="c k2"><span><u>2024</u><i>-</i><u>09</u><i>-</i><u>11</u></span></div>
<div class="c k3"><span><i>XSDD</i><u>240812002</u><i>.TB-</i><u>01</u></span></div>
<div class="c k4"><span>二次加工收<br>货</span></div>
<div class="c k5"><span><i>ECJGSH-</i><u>24</u><i>-</i><u>0021</u><br><u>70</u></span></div>
<div class="c k6"><span>已审核</span></div>
<div class="c k7"><span>卢玉奇</span></div>
<div class="c k8"><span><i>FB-</i>亮记滚牙<br>加工</span></div>
<div class="c k9"></div>
<div class="c k10"></div>
<div class="c k11"><span><u>680200002001</u></span></div>
<div class="c k12"><span>轴承固定螺<br>丝<i>(</i><u>45</u><i>#</i>热处<br>理白镀锌<i>)</i></span></div>
<div class="c k13"><span>按图纸<i>H</i><u>11</u><i>*</i><u>16</u><i>.</i><u>5</u></span></div>
<div class="c k14"><span><i>PCS</i></span></div>
<div class="c k15"><span><u>5990</u></span></div>
<div class="c k16"><span><u>0</u><i>.</i><u>02</u></span></div>
<div class="c k17"><span><u>119</u><i>.</i><u>80</u></span></div>
<div class="c k18"><span><u>2024</u><i>-</i><u>09</u><i>-</i><u>16</u></span></div>
<div class="c k19"><span>急<i>;</i></span></div>
</div>
<div class="r s l" style="top:1050px;height:47px">
<div class="c k0"><span><u>21</u></span></div>
<div class="c k1"><span><u>5</u></span></div>
<div class="c k2"><span><u>2024</u><i>-</i><u>09</u><i>-</i><u>11</u></span></div>
<div class="c k3"><span><i>XSDD</i><u>240812002</u><i>.TB-</i><u>01</u></span></div>
<div class="c k4"><span>二次加工排<br>单</span></div>
<div class="c k5"><span><i>ECJGPD-</i><u>24</u><i>-</i><u>0028</u><br><u>38</u></span></div>
<div class="c k6"><span>待审核</span></div>
<div class="c k7"><span>卢玉奇</span></div>
<div class="c k8"><span><i>FB-</i>张炳飞</span></div>
<div class="c k9"></div>
<div class="c k10"></div>
<div class="c k11"><span><u>680200002001</u></span></div>
<div class="c k12"><span>轴承固定螺<br>丝<i>(</i><u>45</u><i>#</i>热处<br>理白镀锌<i>)</i></span></div>
<div class="c k13"><span>按图纸<i>H</i><u>11</u><i>*</i><u>16</u><i>.</i><u>5</u></span></div>
<div class="c k14"><span><i>PCS</i></span></div>
<div class="c k15"><span><u>5990</u></span></div>
<div class="c k16"><span><u>0</u></span></div>
<div class="c k17"><span><u>0</u><i>.</i><u>00</u></span></div>
<div class="c k18"><span><u>2024</u><i>-</i><u>09</u><i>-</i><u>16</u></span></div>
<div class="c k19"><span>急<i>;</i><u>8</u><i>-</i><u>31</u>已下单<i>;</i></span></div>
</div>
<div class="r w ft" style="top:1098px;height:47px">
<div class="c k0"></div>
<div class="c k1"></div>
<div class="c k2"></div>
<div class="c k3"></div>
<div class="c k4"></div>
<div class="c k5"></div>
<div class="c k6"></div>
<div class="c k7"></div>
<div class="c k8"></div>
<div class="c k9"></div>
<div class="c k10"></div>
<div class="c k11"></div>
<div class="c k12"></div>
<div class="c k13"></div>
<div class="c k14"></div>
<div class="c k15"><span><u>82966</u><i>.</i><u>2</u><br><u>4</u></span></div>
<div class="c k16"></div>
<div class="c k17"></div>
<div class="c k18"></div>
<div class="c k19"></div>
</div>
</div>
<svg class="abs" style="left:340px;top:80px" width="320" height="160" viewBox="340 80 320 160">
<rect x="417.8" y="88.7" width="215" height="45.9" rx="1.5" fill="none" stroke="#f4566f" stroke-width="2.2"/>
<path d="M430.4 120L431 120.6L364.8 205.8L366.3 207L355.3 210.3L357.1 199.5L359 201Z" fill="#fb5068"/>
<circle cx="373.5" cy="187.1" r="14.4" fill="#fb5068"/>
</svg>
<div class="abs" style="left:431px;top:99px;height:24px;line-height:24px;font-size:18px;color:#f4566f;white-space:nowrap">从订单到生产, 整个过程</div>
<div class="abs" style="left:363px;top:176px;width:21px;height:24px;text-align:center;font:bold 17px/24px 'Liberation Serif',serif;color:#fff">1</div>

</body>
</html>
